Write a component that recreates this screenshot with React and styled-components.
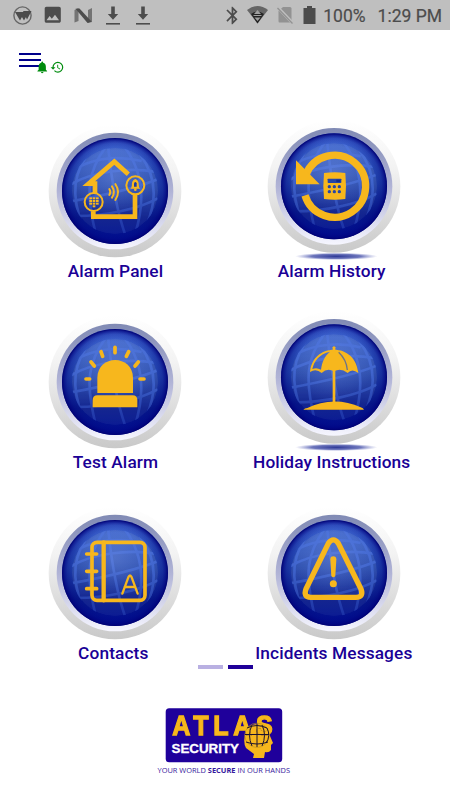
import React from "react";
import styled, { createGlobalStyle } from "styled-components";
import { MdBluetooth, MdHistory, MdImage, MdNotifications } from "react-icons/md";

const GlobalStyle = createGlobalStyle`
    * {
        box-sizing: border-box;
    }

    body {
        margin: 0;
        background: #ffffff;
        font-family: Roboto, sans-serif;
    }
`;

const Screen = styled.div`
    width: 450px;
    height: 800px;
    overflow: hidden;
    display: flex;
    flex-direction: column;
    background: #ffffff;
`;

const StatusBar = styled.div`
    height: 30px;
    flex-shrink: 0;
    display: flex;
    align-items: center;
    justify-content: space-between;
    padding: 0 8px 0 13px;
    background: #bfbfbf;
    color: #4c4c4c;
`;

const StatusGroup = styled.div`
    display: flex;
    align-items: center;
    gap: ${(props) => props.$gap}px;
`;

const StatusIcon = styled.svg`
    display: block;
    flex-shrink: 0;
`;

const ImageIcon = styled(MdImage)`
    margin-left: 10px;
`;

const BluetoothIcon = styled(MdBluetooth)`
    margin-right: -5px;
`;

const StatusText = styled.div`
    font-size: 17.5px;
    line-height: 30px;
    padding-top: 2px;
    margin-left: ${(props) => props.$left || 0}px;
    white-space: nowrap;
    -webkit-text-stroke: 0.2px #4c4c4c;
`;

const Header = styled.div`
    height: 91px;
    flex-shrink: 0;
    display: flex;
    align-items: flex-start;
    padding: 23px 0 0 19px;
`;

const MenuButton = styled.button`
    width: 22px;
    height: 14px;
    display: flex;
    flex-direction: column;
    justify-content: space-between;
    padding: 0;
    border: none;
    background: none;
`;

const MenuLine = styled.span`
    height: 2px;
    background: #00008b;
`;

const HeaderIcons = styled.div`
    display: flex;
    margin: 7px 0 0 -6px;
    color: #008c0e;
`;

const MenuGrid = styled.div`
    display: grid;
    grid-template-columns: 140px 140px;
    grid-auto-rows: 191px;
    column-gap: 78.7px;
    height: 542px;
    flex-shrink: 0;
    padding-left: 45px;
`;

const MenuTile = styled.div`
    display: flex;
    flex-direction: column;
    align-items: center;
`;

const Badge = styled.svg`
    display: block;
    width: 140px;
    height: 140px;
    flex-shrink: 0;
`;

const TileLabel = styled.div`
    margin: -2px 0 0 ${(props) => props.$shift * 2}px;
    font-size: 17.3px;
    font-weight: 500;
    line-height: 24px;
    letter-spacing: 0.12px;
    color: #1a0096;
    white-space: nowrap;
`;

const Pager = styled.div`
    display: flex;
    justify-content: center;
    gap: 5px;
    padding-top: 2px;
`;

const PagerDash = styled.div`
    width: 25px;
    height: 4px;
    background: ${(props) => (props.$active ? "#1f0099" : "#b9b0e2")};
`;

const Footer = styled.div`
    display: flex;
    justify-content: center;
    padding: 37px 2px 0 0;
`;

const LogoName = styled.text`
    font-family: "Liberation Sans", sans-serif;
    font-weight: 700;
    font-size: 28.5px;
    fill: #f7b71d;
    stroke: #f7b71d;
    stroke-width: 1.3px;
    filter: drop-shadow(0.7px 0.8px 0 #2b1a50);
`;

function Globe() {
    return (
        <g clipPath="url(#globeClip)" fill="none" stroke="#4a70dc" strokeWidth="8">
            <circle r="129" fill="#8ea0c8" fillOpacity="0.16" stroke="none" />
            <g opacity="0.68">
                <path d="M-70,-125 C-125,-60 -135,10 -95,110" />
                <path d="M-26,-135 C-81,-60 -91,0 -56,135" />
                <path d="M-20,-128 C-12,-50 5,60 32,135" />
                <path d="M30,-130 C75,-70 98,10 60,130" />
                <path d="M75,-110 C120,-50 130,20 95,100" />
                <path d="M-110,-72 C-50,-102 20,-105 80,-90" />
                <path d="M-132,-20 C-70,-58 40,-72 120,-58" />
                <path d="M-135,32 C-60,18 70,-10 135,-38" />
                <path d="M-115,75 C-30,75 70,55 128,22" />
            </g>
        </g>
    );
}

function AlarmPanelIcon() {
    return (
        <g fill="none" stroke="#f7b71d">
            <path
                d="M40,-50 L-2,-88 L-79,-22 L-60,-22 L-60,6 M-65,61 L-65,77 L60,77 L60,12"
                strokeWidth="14"
            />
            <circle cx="-64" cy="33" r="27" strokeWidth="6" />
            <circle cx="61" cy="-17" r="27" strokeWidth="6" />
            <g fill="#f7b71d" stroke="none">
                {[-77, -67, -57].map((x) =>
                    [19, 27, 35].map((y) => (
                        <rect key={`${x}${y}`} x={x} y={y} width="8" height="6" />
                    ))
                )}
                <rect x="-67" y="43" width="8" height="6" />
                <path d="M46,-7 C52,-12 50,-17 51,-24 C52,-31 57,-34 61,-36 C65,-34 70,-31 71,-24 C72,-17 70,-12 76,-7 Z" />
                <circle cx="61" cy="-4" r="4" />
            </g>
            <path d="M57,-13 L57,-23 Q61,-31 65,-23 L65,-13 Z" fill="#1c3b9f" stroke="none" />
            <path
                d="M-17,-6 Q-11,3 -17,12 M-9,-14 Q2,3 -9,20 M1,-21 Q17,3 1,27"
                strokeWidth="6"
                strokeLinecap="round"
            />
        </g>
    );
}

function AlarmHistoryIcon() {
    return (
        <g>
            <path
                d="M-87,27 A93,93 0 1,0 -84,-36"
                fill="none"
                stroke="#f7b71d"
                strokeWidth="22"
            />
            <path d="M-114,-78 L-114,-6 L-43,-6 Z" fill="#f7b71d" />
            <path
                d="M-30,-40 Q2,-45 34,-40 Q38,0 34,38 Q2,43 -30,38 Q-34,0 -30,-40 Z"
                fill="#f7b71d"
            />
            <g fill="#2445a8">
                <rect x="-19" y="-23" width="41" height="13" rx="2" />
                <rect x="7" y="-20" width="12" height="7" fill="#122c8d" />
                {[-14, 1, 16].map((x) =>
                    [1, 16].map((y) => <circle key={`${x}${y}`} cx={x} cy={y} r="5" />)
                )}
            </g>
        </g>
    );
}

function TestAlarmIcon() {
    return (
        <g fill="#f7b71d">
            <path d="M-53,33 L-53,-12 C-53,-84 54,-84 54,-12 L54,33 Z" />
            <path d="M-67,76 L-67,54 Q-67,40 -53,40 L53,40 Q67,40 67,54 L67,76 Z" />
            <g stroke="#f7b71d" strokeWidth="11" strokeLinecap="round">
                <path d="M0,-104 L0,-88" />
                <path d="M-42,-91 L-37,-77" />
                <path d="M41,-91 L34,-77" />
                <path d="M-72,-60 L-62,-48" />
                <path d="M70,-60 L60,-48" />
                <path d="M-87,-9 L-76,-9" />
                <path d="M75,-9 L87,-9" />
            </g>
        </g>
    );
}

function HolidayIcon() {
    return (
        <g fill="#f7b71d">
            <path d="M-4,-90 Q0,-96 4,-90 L4,74 L-4,74 Z" />
            <path
                fillRule="evenodd"
                d="M-72,-16 C-68,-58 -38,-83 0,-83 C38,-83 68,-58 73,-13 Q54,-28 41,-13 Q20,-30 0,-18 Q-20,-30 -37,-13 Q-54,-28 -72,-16 Z
                M-65,-25 Q-52,-31 -39,-23 C-36,-46 -28,-64 -12,-77 C-44,-70 -60,-49 -65,-25 Z"
            />
            <path
                d="M14,-75 C30,-60 38,-43 40,-22"
                fill="none"
                stroke="#4a63a5"
                strokeWidth="4"
                opacity="0.8"
            />
            <path d="M-92,97 Q-88,93 -80,92 C-30,66 30,66 80,90 Q88,93 90,97 Z" />
        </g>
    );
}

function ContactsIcon() {
    return (
        <g fill="none" stroke="#f7b71d" strokeWidth="11" strokeLinecap="round" strokeLinejoin="round">
            <rect x="-69" y="-92" width="159" height="174" rx="15" />
            <path d="M-34,-92 L-34,82" strokeWidth="13" />
            <path d="M-85,-57 L-55,-57 M-85,-5 L-55,-5 M-85,47 L-55,47" />
            <path d="M22,62 L40,13 Q45,2 50,13 L68,62 M29,42 L61,42" strokeWidth="7" />
        </g>
    );
}

function IncidentsIcon() {
    return (
        <g>
            <path
                d="M-17,-89 Q-2,-110 13,-89 L81,48 Q90,73 66,73 L-70,73 Q-93,72 -84,48 Z"
                fill="none"
                stroke="#f7b71d"
                strokeWidth="16"
                strokeLinejoin="round"
            />
            <path
                d="M-11,-41 Q-11,-50 -2,-50 Q7,-50 7,-41 L4,9 Q-2,17 -8,9 Z"
                fill="#f7b71d"
            />
            <circle cx="-2" cy="32" r="10.5" fill="#f7b71d" />
        </g>
    );
}

const menuItems = [
    { label: "Alarm Panel", icon: AlarmPanelIcon, shift: 0.5 },
    { label: "Alarm History", icon: AlarmHistoryIcon, raised: true, shift: -2 },
    { label: "Test Alarm", icon: TestAlarmIcon, shift: 0.5 },
    { label: "Holiday Instructions", icon: HolidayIcon, raised: true, shift: -2 },
    { label: "Contacts", icon: ContactsIcon, shift: -1.7 },
    { label: "Incidents Messages", icon: IncidentsIcon, shift: 0.2 },
];

function BadgeDefs() {
    return (
        <defs>
            <linearGradient id="rim" x1="0" y1="0" x2="0" y2="1">
                <stop offset="0" stopColor="#ffffff" />
                <stop offset="0.35" stopColor="#f3f3f3" />
                <stop offset="1" stopColor="#c9c9c9" />
            </linearGradient>
            <linearGradient id="ring" x1="0" y1="0" x2="0" y2="1">
                <stop offset="0" stopColor="#808ab4" />
                <stop offset="0.5" stopColor="#b0b3d6" />
                <stop offset="1" stopColor="#f6f6ff" />
            </linearGradient>
            <linearGradient id="ball" x1="0" y1="0" x2="0" y2="1">
                <stop offset="0" stopColor="#3f6ad8" />
                <stop offset="0.45" stopColor="#2144ac" />
                <stop offset="0.75" stopColor="#07198a" />
                <stop offset="1" stopColor="#000f94" />
            </linearGradient>
            <radialGradient id="ballEdge">
                <stop offset="0.76" stopColor="#00007c" stopOpacity="0" />
                <stop offset="0.9" stopColor="#00007c" stopOpacity="0.3" />
                <stop offset="0.96" stopColor="#00007c" stopOpacity="0.65" />
                <stop offset="1" stopColor="#000070" stopOpacity="1" />
            </radialGradient>
            <radialGradient id="glow" cx="0.5" cy="0.35" r="0.4">
                <stop offset="0" stopColor="#7d9be8" stopOpacity="0.35" />
                <stop offset="1" stopColor="#6d94f0" stopOpacity="0" />
            </radialGradient>
            <radialGradient id="drop">
                <stop offset="0" stopColor="#2c3796" />
                <stop offset="0.6" stopColor="#4a55ac" stopOpacity="0.8" />
                <stop offset="1" stopColor="#8a90d0" stopOpacity="0" />
            </radialGradient>
            <linearGradient id="fade" x1="0" y1="0" x2="0" y2="1">
                <stop offset="0.4" stopColor="#ffffff" />
                <stop offset="1" stopColor="#555555" />
            </linearGradient>
            <mask id="globeMask">
                <rect x="-160" y="-160" width="320" height="320" fill="url(#fade)" />
            </mask>
            <clipPath id="globeClip">
                <circle r="130" />
            </clipPath>
        </defs>
    );
}

function MenuItem(props) {
    const Icon = props.item.icon;
    return (
        <MenuTile>
            <Badge viewBox="-210 -210 420 420">
                <BadgeDefs />
                {props.item.raised && (
                    <ellipse cx="7" cy="196" rx="124" ry="11" fill="url(#drop)" />
                )}
                <g transform={props.item.raised ? "translate(0,-14)" : undefined}>
                    <circle r="199" fill="url(#rim)" />
                    <circle r="175" fill="url(#ring)" />
                    <circle r="159" fill="url(#ball)" />
                    <circle r="159" fill="url(#ballEdge)" />
                    <g mask="url(#globeMask)">
                        <Globe />
                    </g>
                    <circle r="150" fill="url(#glow)" />
                    <Icon />
                </g>
            </Badge>
            <TileLabel $shift={props.item.shift}>{props.item.label}</TileLabel>
        </MenuTile>
    );
}

function DownloadIcon() {
    return (
        <StatusIcon width="14" height="19" viewBox="0 0 14 19">
            <path d="M5.2,0.5 H8.8 V8 H12.2 L7,13.8 L1.8,8 H5.2 Z" fill="#4c4c4c" />
            <rect y="17" width="14" height="1.6" fill="#4c4c4c" />
        </StatusIcon>
    );
}

function PhoneStatus() {
    return (
        <StatusBar>
            <StatusGroup $gap={0}>
                <StatusIcon width="19" height="19" viewBox="0 0 19 19">
                    <circle cx="9.5" cy="9.5" r="8.6" fill="none" stroke="#666666" strokeWidth="1.4" />
                    <path d="M2,6 L6,6 L9.5,10 L7,14.5 Z M6,6 L11,6 L13.5,10 L11,14.5 Z" fill="#4c4c4c" />
                    <path d="M10,5 L18.5,5 L14,13.5 Z" fill="#4c4c4c" />
                </StatusIcon>
                <ImageIcon size={21.5} />
                <StatusIcon width="42" height="15" viewBox="-10.5 0 42 15">
                    <path d="M0,2 L4,0 L4,13 L0,14.5 Z M13.5,2 L17.5,0 L17.5,14 L13.5,15 Z" fill="#737373" />
                    <path d="M1,0.8 L5,0.6 L17,13.5 L13,15 Z" fill="#4c4c4c" />
                </StatusIcon>
                <StatusGroup $gap={16}>
                    <DownloadIcon />
                    <DownloadIcon />
                </StatusGroup>
            </StatusGroup>
            <StatusGroup $gap={9}>
                <BluetoothIcon size={21} />
                <StatusIcon width="21" height="18" viewBox="0 0 21 18">
                    <path d="M0,4 Q10.5,-4 21,4 L10.5,17.5 Z" fill="#666666" />
                    <path d="M4,8 Q10.5,3 17,8 L10.5,17.5 Z" fill="#242424" />
                    <path
                        d="M10.5,4 L14,8 H7 Z M6.5,9 H14.5 V10 H6.5 Z M7.5,11.5 H13.5 L10.5,15 Z"
                        fill="#a0a0a0"
                    />
                </StatusIcon>
                <StatusIcon width="17" height="18" viewBox="0 0 17 18">
                    <path d="M6,1 H13 Q14.5,1 14.5,2.5 V16.5 H2.5 Q1.5,16.5 1.5,15 V5 Z" fill="#929292" />
                    <path d="M0.5,1 L16,17.5" stroke="#bfbfbf" strokeWidth="3" />
                    <path d="M0.5,2 L15.5,17.5" stroke="#929292" strokeWidth="1.3" />
                </StatusIcon>
                <StatusIcon width="13" height="18" viewBox="0 0 13 18">
                    <path d="M4,0 H9 V2 H12.5 V18 H0.5 V2 H4 Z" fill="#4c4c4c" />
                </StatusIcon>
                <StatusText $left={-2}>100%</StatusText>
                <StatusText $left={3}>1:29 PM</StatusText>
            </StatusGroup>
        </StatusBar>
    );
}

function AtlasLogo() {
    return (
        <StatusIcon width="140" height="70" viewBox="154 706 140 70">
            <rect x="165.7" y="708.3" width="116.5" height="54" rx="3.5" fill="#1f009b" />
            <path
                d="M247,728 Q257,720 268,728 L270,736 L273,743 L271,745 L271,750 Q269,753 265,752 L264,758 L253,758 L254,754 L246,748 Q242,741 247,728 Z"
                fill="#f7b71d"
            />
            <g transform="translate(172.3,735.3) scale(0.88,1)">
                <LogoName textLength="114" lengthAdjust="spacing">
                    ATLAS
                </LogoName>
            </g>
            <text
                x="171.5"
                y="752.5"
                fontFamily="Liberation Sans, sans-serif"
                fontWeight="700"
                fontSize="12.5"
                textLength="67.5"
                lengthAdjust="spacingAndGlyphs"
                fill="#ffffff"
                stroke="#ffffff"
                strokeWidth="0.3"
            >
                SECURITY
            </text>
            <g fill="none" stroke="#1b1330" strokeWidth="1">
                <circle cx="257" cy="735.3" r="12.2" stroke="#b98d1d" strokeWidth="0.6" />
                <path d="M247,728 Q257,723 267,728 M245,734.5 H269 M246,742 Q257,746 268,742" />
                <path d="M252,725 Q247,735 252,746 M257,724 V747 M262,725 Q267,735 262,746" />
                <path d="M267,728 Q271,736 266,743" />
            </g>
            <text
                x="157.5"
                y="773.4"
                fontFamily="Open Sans, sans-serif"
                fontSize="7.4"
                textLength="132.5"
                lengthAdjust="spacingAndGlyphs"
                fill="#35189d"
            >
                YOUR WORLD <tspan fontWeight="700">SECURE</tspan> IN OUR HANDS
            </text>
        </StatusIcon>
    );
}

function App() {
    return (
        <Screen>
            <GlobalStyle />
            <PhoneStatus />
            <Header>
                <MenuButton aria-label="Menu">
                    <MenuLine />
                    <MenuLine />
                    <MenuLine />
                </MenuButton>
                <HeaderIcons>
                    <MdNotifications size={14.5} />
                    <MdHistory size={14.5} />
                </HeaderIcons>
            </Header>
            <MenuGrid>
                {menuItems.map((item) => (
                    <MenuItem key={item.label} item={item} />
                ))}
            </MenuGrid>
            <Pager>
                <PagerDash />
                <PagerDash $active />
            </Pager>
            <Footer>
                <AtlasLogo />
            </Footer>
        </Screen>
    );
}

export default App;
